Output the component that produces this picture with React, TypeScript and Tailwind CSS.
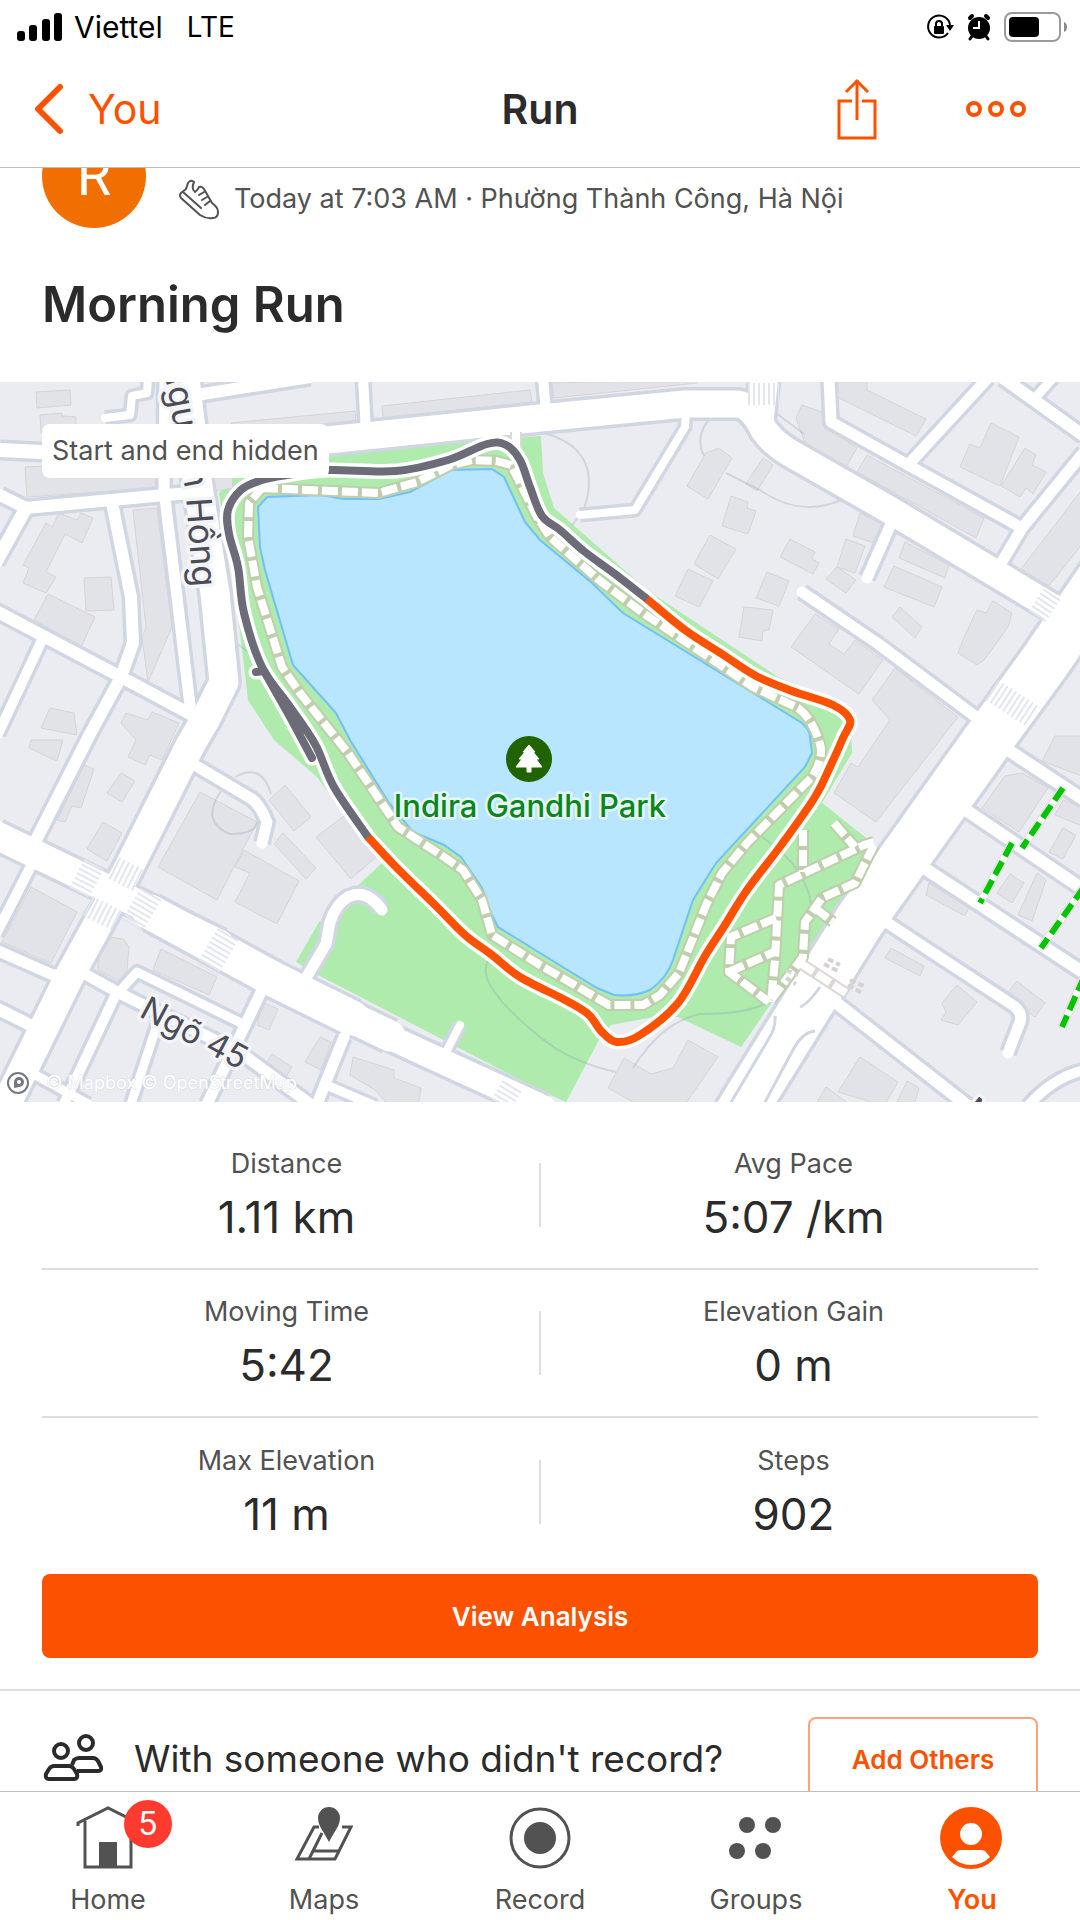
import React, { useState } from 'react';

interface Road {
  d: string;
  w: number;
}

type Point = [number, number];

const roads: Road[] = [
  { d: 'M165 -2 L164 108 L177 215 L190 323', w: 11 },
  { d: 'M185 -4 L197 98 L215 211 L224 300 L205 338 L191 362 L126 491 L71 591 L5 725', w: 29 },
  { d: 'M0 68 L41 70 L165 63', w: 14 },
  { d: 'M165 76 L327 58 L540 36 L685 22 L738 22 Q752 24 764 48 Q772 60 790 71 L888 127 L1060 230', w: 27 },
  { d: 'M764 -2 L760 34', w: 28 },
  { d: 'M105 36 L130 33 L132 14 L147 11 L148 -4', w: 8 },
  { d: 'M190 14 L310 -5', w: 12 },
  { d: 'M363 -4 L366 50', w: 10 },
  { d: 'M543 -4 L547 40', w: 10 },
  { d: 'M0 113 L26 126 L165 113 L190 111', w: 12 },
  { d: 'M26 126 L-4 180', w: 13 },
  { d: 'M113 126 L131 215 L133 261 L121 295 L90 352 L36 458', w: 12 },
  { d: 'M-4 229 L121 295 L192 333', w: 12 },
  { d: 'M43 256 L-2 352', w: 10 },
  { d: 'M1112 182 L1044 281 L988 358 L860 538 L747 720 L735 740', w: 50 },
  { d: 'M686 30 L685 45 L635 128 L580 133', w: 8 },
  { d: 'M829 -4 L831 40 L908 83 L1022 146 L1000 183', w: 11 },
  { d: 'M908 83 L988 -4', w: 11 },
  { d: 'M1022 146 L1084 70', w: 11 },
  { d: 'M1003 -4 L1084 54', w: 12 },
  { d: 'M1036 15 L1053 -4', w: 9 },
  { d: 'M891 142 L867 196', w: 11 },
  { d: 'M802 210 L877 261 L980 338', w: 11 },
  { d: 'M-4 453 L110 508 L220 562', w: 28 },
  { d: 'M150 530 L275 598 L352 636', w: 35 },
  { d: 'M340 630 L390 654', w: 31 },
  { d: 'M340 632 L413 666 L544 726', w: 25 },
  { d: 'M193 382 L252 417 Q260 423 267 440 L262 461', w: 11 },
  { d: 'M306 596 L326 562 L330 540 Q336 522 348 515 Q366 506 382 528', w: 11 },
  { d: 'M442 678 L460 643', w: 8 },
  { d: 'M36 474 L12 521 L-4 552', w: 10 },
  { d: 'M-4 568 L53 593 L83 591 L119 611 L241 671 L310 722', w: 11 },
  { d: 'M119 610 L137 590 L241 641', w: 9 },
  { d: 'M260 612 L238 658 L207 722', w: 11 },
  { d: 'M115 614 L64 722', w: 10 },
  { d: 'M-4 626 L34 645', w: 12 },
  { d: 'M30 690 L88 722', w: 9 },
  { d: 'M158 640 L131 722', w: 9 },
  { d: 'M344 655 L317 722', w: 11 },
  { d: 'M324 702 L375 724', w: 9 },
  { d: 'M1005 366 L1084 418', w: 12 },
  { d: 'M960 424 L1084 508', w: 12 },
  { d: 'M918 482 L1084 591', w: 12 },
  { d: 'M880 536 L1014 624 Q1023 631 1020 640 L1008 671', w: 11 },
  { d: 'M830 616 L968 724', w: 12 },
  { d: 'M1028 724 Q1052 696 1084 688', w: 10 },
];

const buildings = [
  '36,10 70,8 71,23 37,26',
  '40,33 62,31 62,34 76,35 76,51 41,51',
  '25,85 157,78 157,106 27,115',
  '59,131 77,138 81,131 93,136 82,161 65,152 46,190 56,195 46,211 23,201 29,186 23,183 46,141 52,145',
  '84,196 111,195 114,228 86,229',
  '48,212 95,235 81,265 34,238',
  '133,128 157,126 172,245 148,300 142,255 146,245',
  '50,326 74,331 77,353 41,346',
  '126,331 148,338 152,330 179,341 162,378 150,373 145,383 128,375 136,358 121,341',
  '231,41 355,29 356,40 238,50',
  '382,24 530,8 532,20 383,36',
  '210,95 232,95 233,106 216,109',
  '552,1 697,-2 697,1 554,16',
  '838,-2 867,-2 867,8 926,37 916,54 837,15',
  '802,23 822,30 826,46 857,66 846,85 805,61 796,36',
  '867,73 984,136 976,156 857,90',
  '991,41 1019,55 1000,104 960,85 970,62 980,66',
  '1025,66 1036,73 1032,83 1046,90 1033,112 1026,106 1020,115 1001,104',
  '1084,105 1084,160 1048,205 1021,187',
  '719,66 732,76 708,117 687,104 706,71',
  '763,76 773,83 757,109 746,102',
  '731,114 748,120 747,126 756,129 748,152 722,144',
  '710,153 736,167 718,197 694,182',
  '688,187 713,199 699,225 675,214',
  '790,157 815,170 812,177 819,181 813,192 780,175',
  '767,190 789,199 779,224 756,216',
  '744,225 773,228 769,248 763,249 762,259 739,255',
  '846,157 865,164 855,191 837,185',
  '837,185 856,198 846,211 826,197',
  '860,131 886,144 874,161 853,154',
  '905,160 949,183 945,196 899,176',
  '894,184 942,205 934,225 884,205',
  '900,225 922,245 915,256 892,235',
  '993,219 1012,231 1008,245 984,278 977,283 958,271 964,255 977,228 986,231',
  '815,232 839,247 829,262 844,272 855,258 883,278 859,312 791,265',
  '895,286 958,335 876,440 834,411 851,381 858,385 890,338 872,318',
  '31,358 63,358 57,379 29,366',
  '84,383 94,387 81,426 72,424 65,440 57,438',
  '121,391 135,399 122,420 107,411',
  '103,440 122,451 107,479 87,467',
  '200,410 257,440 217,518 158,485',
  '244,468 299,499 277,542 235,520 250,491 235,485',
  '285,403 311,435 294,449 269,418',
  '283,451 316,486 306,497 274,462',
  '344,434 376,475 351,497 316,455',
  '31,505 77,530 51,581 2,560',
  '107,555 123,557 129,565 127,588 119,599 98,588 98,568',
  '161,567 217,595 209,613 153,588',
  '262,620 278,627 269,648 257,643',
  '320,655 331,660 321,688 305,680',
  '272,672 292,685 286,695 264,685',
  '353,675 394,688 394,696 421,706 418,724 389,724 375,708 350,693',
  '1005,394 1022,391 1048,406 1019,450 982,426',
  '1055,354 1084,354 1084,395 1042,379',
  '1063,418 1084,426 1084,445 1055,433',
  '1063,446 1076,453 1063,477 1049,470',
  '1010,492 1024,501 1012,521 997,511',
  '1037,491 1046,498 1032,539 1018,533',
  '929,501 969,525 965,534 926,513',
  '891,566 924,584 920,594 885,576',
  '957,603 977,620 958,643 941,638 946,630 942,621',
  '1017,599 1045,621 1035,635 1005,614',
  '688,658 718,675 684,724 640,724 608,706 624,676 651,692 673,686',
  '860,675 898,700 884,724 838,710',
  '907,699 919,706 914,724 895,724',
  '826,705 852,724 815,724',
];

// Zebra crossings, each a short thick line broken into stripes
const crossings: Road[] = [
  { d: 'M748 12 L779 12', w: 22 },
  { d: 'M1052 212 L1036 236', w: 20 },
  { d: 'M992 308 L1032 334', w: 24 },
  { d: 'M94 482 L78 513', w: 22 },
  { d: 'M114 486 L138 498', w: 24 },
  { d: 'M151 512 L131 546', w: 24 },
  { d: 'M88 524 L118 539', w: 22 },
  { d: 'M228 552 L207 588', w: 24 },
  { d: 'M512 704 L500 724', w: 22 },
];

const footpaths = [
  'M262 106 L379 111 L417 100 L451 83 L472 78 L496 79 L511 83 L520 101 L537 135 L550 155 L599 198 L643 231 L753 305 L798 326 Q812 336 820 362 Q824 376 812 395 L747 461 L722 491 L707 521 L679 591 L660 613 L643 623 L609 623 L540 583 L492 553 L482 518 L463 488 L444 475 L398 445 L348 371 L300 311 L282 285 L257 205 L248 155 L249 121 Z',
  'M803 448 L803 490',
  'M834 441 L855 465',
  'M874 460 L864 463 L779 503 L775 578 L771 620',
  'M874 463 L855 501 L822 516 L805 540 L803 575 L771 618',
  'M776 536 L731 555 L729 590 L769 620',
  'M729 590 L774 570',
  'M815 526 L833 540',
];

const footCrossings = ['M800 581 L846 611', 'M516 50 L516 68'];

const alleys = [
  'M1063 406 L1022 466',
  'M1012 461 L980 521',
  'M1084 505 L1041 566',
  'M1084 595 L1062 645',
];

const trails = [
  'M540 50 Q606 66 583 130 L572 143',
  'M711 35 Q694 54 704 74',
  'M726 91 L760 108 Q800 136 841 118',
  'M772 28 L804 52',
  'M235 395 Q262 380 271 412',
  'M221 409 Q200 440 230 452 Q256 452 257 440',
  'M489 578 Q472 600 540 655 Q570 680 616 690',
  'M633 686 Q662 640 700 632 Q745 632 764 622',
  'M234 260 L262 279',
  'M762 455 Q815 490 812 540',
];

const slowTrack: Point[] = [
  [368, 455], [334, 405], [315, 362], [288, 322], [262, 285], [244, 231], [238, 185], [229, 152],
  [228, 128], [241, 108], [262, 98], [287, 93], [327, 88], [396, 89], [448, 78], [487, 62],
  [506, 63], [520, 78], [530, 105], [542, 134], [560, 148], [585, 170], [615, 192], [647, 217],
];

const fastTrack: Point[] = [
  [647, 217], [685, 248], [722, 272], [756, 294], [792, 309], [833, 323], [850, 338], [843, 356],
  [830, 385], [815, 415], [782, 462], [747, 508], [725, 543], [705, 574], [678, 621], [640, 653],
  [617, 660], [602, 650], [588, 632], [565, 618], [520, 595], [492, 573], [465, 553], [437, 525],
  [396, 485], [368, 455],
];

// Catmull-Rom spline through the GPS points, written as cubic beziers
const smooth = (points: Point[]) =>
  points.slice(1).reduce((path, p2, i) => {
    const p0 = points[i - 1] ?? points[i];
    const p1 = points[i];
    const p3 = points[i + 2] ?? p2;
    const c1 = `${p1[0] + (p2[0] - p0[0]) / 6} ${p1[1] + (p2[1] - p0[1]) / 6}`;
    const c2 = `${p2[0] - (p3[0] - p1[0]) / 6} ${p2[1] - (p3[1] - p1[1]) / 6}`;
    return `${path} C${c1} ${c2} ${p2[0]} ${p2[1]}`;
  }, `M${points[0][0]} ${points[0][1]}`);

const slowPath = smooth(slowTrack);
const fastPath = smooth(fastTrack);
const slowSpur = 'M256 290 L264 289 L290 335 L312 376';

const stats = [
  [
    { label: 'Distance', value: '1.11 km' },
    { label: 'Avg Pace', value: '5:07 /km' },
  ],
  [
    { label: 'Moving Time', value: '5:42' },
    { label: 'Elevation Gain', value: '0 m' },
  ],
  [
    { label: 'Max Elevation', value: '11 m' },
    { label: 'Steps', value: '902' },
  ],
];

const RouteMap = () => (
  <svg viewBox="0 0 1080 720" className="block w-full" role="img" aria-label="Route map">
    <rect width="1080" height="720" fill="#ebecf2" />
    <polygon
      fill="#aeebad"
      points="327,71 541,54 543,91 554,126 647,208 778,295 850,325 852,371 822,421 879,466 741,665 678,635 654,635 611,643 599,658 566,720 540,708 318,593 296,580 319,540 382,481 368,465 317,395 274,358 248,318 241,258 229,175 219,111 234,95"
    />
    <g fill="#e2e3e9" stroke="#d8d3d4" strokeWidth="1">
      {buildings.map((points) => (
        <polygon key={points} points={points} />
      ))}
    </g>
    <g fill="none" stroke="#8f97ab" strokeOpacity="0.28" strokeWidth="2">
      {trails.map((d) => (
        <path key={d} d={d} />
      ))}
    </g>

    <g fill="none" stroke="#d0d6e2" strokeLinejoin="round">
      {roads.map(({ d, w }) => (
        <path key={d} d={d} strokeWidth={w + 7} />
      ))}
    </g>
    <g fill="none" stroke="#ffffff" strokeLinejoin="round" strokeLinecap="round">
      {roads.map(({ d, w }) => (
        <path key={d} d={d} strokeWidth={w} />
      ))}
    </g>
    <g fill="none" stroke="#e3e6ef" strokeDasharray="2 3">
      {crossings.map(({ d, w }) => (
        <path key={d} d={d} strokeWidth={w} />
      ))}
    </g>
    <g fill="none" stroke="#d0d6e2" strokeWidth="3">
      <path d="M775 634 Q776 646 768 658 L730 722" />
      <path d="M815 649 Q803 650 794 666 L764 722" />
      <path d="M820 605 Q808 622 800 625" />
    </g>

    <path
      d="M258 125 L267 115 L320 113 L344 117 L379 117 L410 110 L451 88 L492 87 L504 95 L525 140 L540 158 L592 201 L623 231 L802 341 Q810 348 810 355 L812 371 L805 385 L716 481 L693 518 L673 578 Q667 596 650 608 Q635 615 614 613 L597 606 L540 571 L498 545 L491 531 L482 506 L461 475 L444 463 L413 450 L389 421 L350 358 L336 331 L293 283 L265 188 L260 165 Z"
      fill="#b8e5ff"
      stroke="#70c1fb"
      strokeWidth="2"
    />

    <g fill="none" strokeLinejoin="round">
      {footpaths.map((d) => (
        <path key={d} d={d} stroke="#bfceac" strokeWidth="12" />
      ))}
      {footCrossings.map((d) => (
        <path key={d} d={d} stroke="#ddd8d6" strokeWidth="12" />
      ))}
      {[...footpaths, ...footCrossings].map((d) => (
        <path key={d} d={d} stroke="#ffffff" strokeWidth="8" strokeDasharray="16 4" />
      ))}
      {alleys.map((d) => (
        <path key={d} d={d} stroke="#e6d9dc" strokeWidth="9" />
      ))}
      {alleys.map((d) => (
        <path key={d} d={d} stroke="#ffffff" strokeWidth="7" />
      ))}
      {alleys.map((d) => (
        <path key={d} d={d} stroke="#00c400" strokeWidth="6" strokeDasharray="15 6" />
      ))}
    </g>
    <g fill="none" stroke="#d6d2d2" strokeWidth="4" strokeDasharray="6 3">
      <path d="M824 582 L838 589 M828 577 L840 583" />
      <path d="M848 603 L862 611 M850 598 L864 604" />
      <path d="M786 596 L796 602 M786 588 L798 593" />
    </g>

    <g
      fontFamily="Inter, sans-serif"
      fontSize="35"
      fill="#4c4c57"
      stroke="#f3f4f8"
      strokeWidth="7"
      strokeLinejoin="round"
      paintOrder="stroke"
    >
      <path id="street" d="M146 -60 L166 0 L186 112 L193 211" fill="none" stroke="none" />
      <text textAnchor="end">
        <textPath href="#street" startOffset="98%">
          Nguyên Hồng
        </textPath>
      </text>
      <text transform="translate(138 634) rotate(28)" fontSize="33">
        Ngõ 45
      </text>
      <text transform="translate(962 732) rotate(38)" fontSize="33">
        N
      </text>
    </g>

    <g fill="none" strokeLinecap="round" strokeLinejoin="round">
      <g stroke="#ffffff" strokeWidth="15">
        <path d={slowPath} />
        <path d={slowSpur} />
        <path d={fastPath} />
      </g>
      <path d={fastPath} stroke="#fc5200" strokeWidth="8" />
      <g stroke="#6c6c78" strokeWidth="8">
        <path d={slowPath} strokeLinecap="butt" />
        <path d={slowSpur} />
        <path d="M275 306 L300 350" />
      </g>
    </g>

    <circle cx="529" cy="377" r="23" fill="#1f6400" />
    <path
      d="M529 363 L535 370 H533 L539 377 H536 L542 385 H531 V390 H527 V385 H516 L522 377 H519 L525 370 H523 Z"
      fill="#ffffff"
      stroke="#ffffff"
      strokeLinejoin="round"
    />
    <text
      x="530"
      y="435"
      textAnchor="middle"
      fontFamily="Inter, sans-serif"
      fontSize="31"
      fontWeight="500"
      fill="#0b8520"
      stroke="#e4f5f2"
      strokeWidth="5"
      strokeLinejoin="round"
      paintOrder="stroke"
    >
      Indira Gandhi Park
    </text>

    <circle cx="18" cy="701" r="10" fill="#ffffff" stroke="#777781" strokeWidth="2" />
    <path d="M14 706 V700 A5 5 0 1 1 19 705 Z" fill="#777781" />
    <circle cx="19" cy="700" r="2" fill="#ffffff" />
    <text
      x="46"
      y="707"
      fontFamily="Inter, sans-serif"
      fontSize="18"
      fill="#ffffff"
      stroke="#d9dbe3"
      strokeWidth="1"
      paintOrder="stroke"
    >
      © Mapbox © OpenStreetMap
    </text>
  </svg>
);

const StatusBar = () => (
  <div className="flex h-[54px] items-center justify-between pl-4 pr-3 text-black">
    <div className="flex items-center">
      <svg width="48" height="30" viewBox="0 0 48 30" fill="#000000">
        <rect x="1" y="19" width="8" height="10" rx="3" />
        <rect x="13" y="13" width="8" height="16" rx="3" />
        <rect x="26" y="7" width="8" height="22" rx="3" />
        <rect x="38" y="1" width="8" height="28" rx="3" />
      </svg>
      <span className="ml-2.5 text-[30px]">Viettel</span>
      <span className="ml-6 text-[28px]">LTE</span>
    </div>
    <div className="flex items-center">
      <svg width="28" height="28" viewBox="0 0 28 28">
        <path d="M22 20 A11 11 0 1 1 24 12" fill="none" stroke="#000000" strokeWidth="2" />
        <path d="M20 12 H28 L24 18 Z" fill="#000000" />
        <rect x="8" y="13" width="10" height="8" rx="1" fill="#000000" />
        <path d="M10 14 V11 A3 3 0 0 1 16 11 V14" fill="none" stroke="#000000" strokeWidth="2" />
      </svg>
      <svg className="ml-3" width="26" height="28" viewBox="0 0 26 28">
        <circle cx="13" cy="15" r="11" fill="#000000" />
        <path d="M4 5 L6 3 M22 5 L20 3" stroke="#000000" strokeWidth="4" strokeLinecap="round" />
        <path d="M6 23 L4 26 M20 23 L22 26" stroke="#000000" strokeWidth="3" strokeLinecap="round" />
        <path d="M13 8 V15 H7" fill="none" stroke="#ffffff" strokeWidth="2" />
      </svg>
      <svg className="ml-3" width="64" height="30" viewBox="0 0 64 30">
        <rect x="1" y="1" width="55" height="28" rx="7" fill="none" stroke="#9a9a9a" strokeWidth="2" />
        <rect x="5" y="5" width="30" height="20" rx="4" fill="#000000" />
        <path d="M60 10 Q63 11 63 15 Q63 19 60 20 Z" fill="#8a8a8a" />
      </svg>
    </div>
  </div>
);

const HomeIcon = () => (
  <svg width="64" height="64" viewBox="0 0 64 64" fill="none" stroke="#525252" strokeWidth="3">
    <path d="M2 20 V17 L32 2 L62 17 V20" />
    <path d="M9 15 V61 H55 V15" />
    <rect x="23" y="36" width="18" height="25" fill="#525252" stroke="none" />
  </svg>
);

const MapsIcon = () => (
  <svg width="64" height="64" viewBox="0 0 64 64" fill="none" stroke="#525252" strokeWidth="3">
    <path d="M27 21 H22 L5 53 H43 L59 21 H50" />
    <path d="M30 27 L17 53 M21 45 H46" />
    <path d="M37 36 C32 26 26 20 26 12 A11 11 0 0 1 48 12 C48 20 42 26 37 36 Z" fill="#525252" stroke="none" />
  </svg>
);

const RecordIcon = () => (
  <svg width="64" height="64" viewBox="0 0 64 64">
    <circle cx="32" cy="32" r="29" fill="none" stroke="#525252" strokeWidth="3" />
    <circle cx="32" cy="32" r="16" fill="#525252" />
  </svg>
);

const GroupsIcon = () => (
  <svg width="64" height="64" viewBox="0 0 64 64" fill="#525252">
    <circle cx="23" cy="19" r="8" />
    <circle cx="49" cy="19" r="8" />
    <circle cx="13" cy="45" r="8" />
    <circle cx="39" cy="45" r="8" />
  </svg>
);

const YouIcon = () => (
  <svg width="64" height="64" viewBox="0 0 64 64">
    <circle cx="31" cy="32" r="31" fill="#fc5200" />
    <circle cx="31" cy="28" r="11" fill="#ffffff" />
    <path d="M12 51 L17 45 Q19 44 21 44 H41 Q43 44 45 45 L50 51 Q42 59 31 59 Q20 59 12 51 Z" fill="#ffffff" />
  </svg>
);

const tabs = [
  { name: 'Home', icon: <HomeIcon />, badge: 5 },
  { name: 'Maps', icon: <MapsIcon /> },
  { name: 'Record', icon: <RecordIcon /> },
  { name: 'Groups', icon: <GroupsIcon /> },
  { name: 'You', icon: <YouIcon /> },
];

export default function App() {
  const [activeTab, setActiveTab] = useState('You');

  return (
    <div className="flex h-screen w-full flex-col bg-white font-['Inter',sans-serif] text-[#2b2b2b]">
      <StatusBar />

      {/* Navigation bar */}
      <header className="grid h-[114px] grid-cols-[1fr_auto_1fr] items-center border-b border-[#bdbdbd] px-8 pb-1">
        <button type="button" className="flex items-center gap-6 text-[41px] leading-[48px] text-[#fc5200]">
          <svg width="32" height="52" viewBox="0 0 32 52" fill="none" stroke="#fc5200" strokeWidth="6" strokeLinecap="round" strokeLinejoin="round">
            <path d="M28 4 L6 26 L28 48" />
          </svg>
          You
        </button>
        <h1 className="text-[41px] font-semibold leading-[48px]">Run</h1>
        <div className="flex items-center justify-end gap-[86px] pr-5">
          <button type="button" aria-label="Share">
            <svg width="42" height="64" viewBox="0 0 42 64" fill="none" stroke="#fc5200" strokeWidth="3">
              <path d="M16 24 H3 V61 H39 V24 H26" />
              <path d="M21 43 V3" />
              <path d="M10 15 L21 4 L32 15" />
            </svg>
          </button>
          <button type="button" aria-label="More">
            <svg width="64" height="20" viewBox="0 0 64 20" fill="none" stroke="#fc5200" strokeWidth="4">
              <circle cx="10" cy="10" r="6" />
              <circle cx="32" cy="10" r="6" />
              <circle cx="54" cy="10" r="6" />
            </svg>
          </button>
        </div>
      </header>

      {/* Activity */}
      <main className="min-h-0 flex-1 overflow-y-auto [scrollbar-width:none]">
        <section className="px-[42px]">
          <div className="-mt-11 flex items-end">
            <div className="flex size-[104px] items-center justify-center rounded-full bg-[#f06f00] font-['Roboto',sans-serif] text-[56px] text-white">
              R
            </div>
            <svg className="mb-1.5 ml-8" width="42" height="44" viewBox="0 0 42 44" fill="none" stroke="#525252" strokeWidth="2" strokeLinecap="round" strokeLinejoin="round">
              <path d="M8 11 L10 5 Q13 1 16 4 Q13 11 17 14 Q20 12 21 9 Q24 8 26 11 L34 25 Q40 29 40 34 Q40 40 35 40 Q28 41 22 37 L3 20 Q1 17 3 15 Z" />
              <path d="M5 14 L23 30" />
              <path d="M21 17 L26 14 M24 22 L29 19 M27 27 L32 23" />
            </svg>
            <p className="mb-2 ml-3.5 text-[27px] leading-[42px] text-[#525252]">
              Today at 7:03 AM · Phường Thành Công, Hà Nội
            </p>
          </div>
          <h2 className="pb-[45px] pt-[45px] text-[49px] font-semibold leading-[64px]">Morning Run</h2>
        </section>

        <section className="relative">
          <RouteMap />
          <span className="absolute left-[42px] top-[42px] rounded-lg bg-white px-2.5 text-[27px] leading-[54px] text-[#525252]">
            Start and end hidden
          </span>
        </section>

        <section className="px-[42px] pt-5">
          <div className="divide-y-2 divide-[#dddde5]">
            {stats.map((row) => (
              <dl key={row[0].label} className="flex h-[148px] items-center justify-between gap-2">
                <div className="flex-1 text-center">
                  <dt className="text-[27px] leading-8 text-[#525252]">{row[0].label}</dt>
                  <dd className="mt-3 text-[44px] leading-[50px]">{row[0].value}</dd>
                </div>
                <div className="h-16 w-0.5 bg-[#dddde5]" />
                <div className="flex-1 text-center">
                  <dt className="text-[27px] leading-8 text-[#525252]">{row[1].label}</dt>
                  <dd className="mt-3 text-[44px] leading-[50px]">{row[1].value}</dd>
                </div>
              </dl>
            ))}
          </div>
          <button type="button" className="mt-2 h-[84px] w-full rounded-lg bg-[#fc5200] text-[26px] font-semibold text-white">
            View Analysis
          </button>
        </section>

        <section className="mt-[31px] flex items-center border-t-2 border-[#dddde5] px-[42px] pt-[26px]">
          <svg width="64" height="52" viewBox="0 0 64 52" fill="none" stroke="#2b2b2b" strokeWidth="4" strokeLinejoin="round">
            <circle cx="19" cy="18" r="7" />
            <circle cx="44" cy="10" r="7" />
            <path d="M12 33 H27 Q30 33 32 36 L35 41 Q36 46 32 46 H7 Q3 46 4 41 L7 36 Q9 33 12 33 Z" />
            <path d="M30 32 L32 27 Q34 25 37 25 H51 Q54 25 56 28 L59 34 Q60 38 56 38 H35" />
          </svg>
          <p className="ml-7 text-[37px] leading-[48px]">With someone who didn't record?</p>
          <button type="button" className="ml-auto h-[84px] w-[230px] rounded-lg border-2 border-[#ffa27a] text-[26px] font-semibold text-[#fc5200]">
            Add Others
          </button>
        </section>
      </main>

      {/* Tab bar */}
      <nav className="relative grid h-[129px] grid-cols-5 border-t border-[#bdbdbd] bg-white">
        {tabs.map(({ name, icon, badge }) => (
          <button
            key={name}
            type="button"
            onClick={() => setActiveTab(name)}
            className={`flex flex-col items-center pt-3.5 text-[27px] leading-8 ${
              activeTab === name ? 'font-semibold text-[#fc5200]' : 'text-[#525252]'
            }`}
          >
            <span className="relative">
              {icon}
              {badge && (
                <span className="absolute -right-8 -top-1.5 flex size-12 items-center justify-center rounded-full bg-[#ff3b30] text-[32px] text-white">
                  {badge}
                </span>
              )}
            </span>
            <span className="mt-3.5">{name}</span>
          </button>
        ))}
      </nav>
    </div>
  );
}
